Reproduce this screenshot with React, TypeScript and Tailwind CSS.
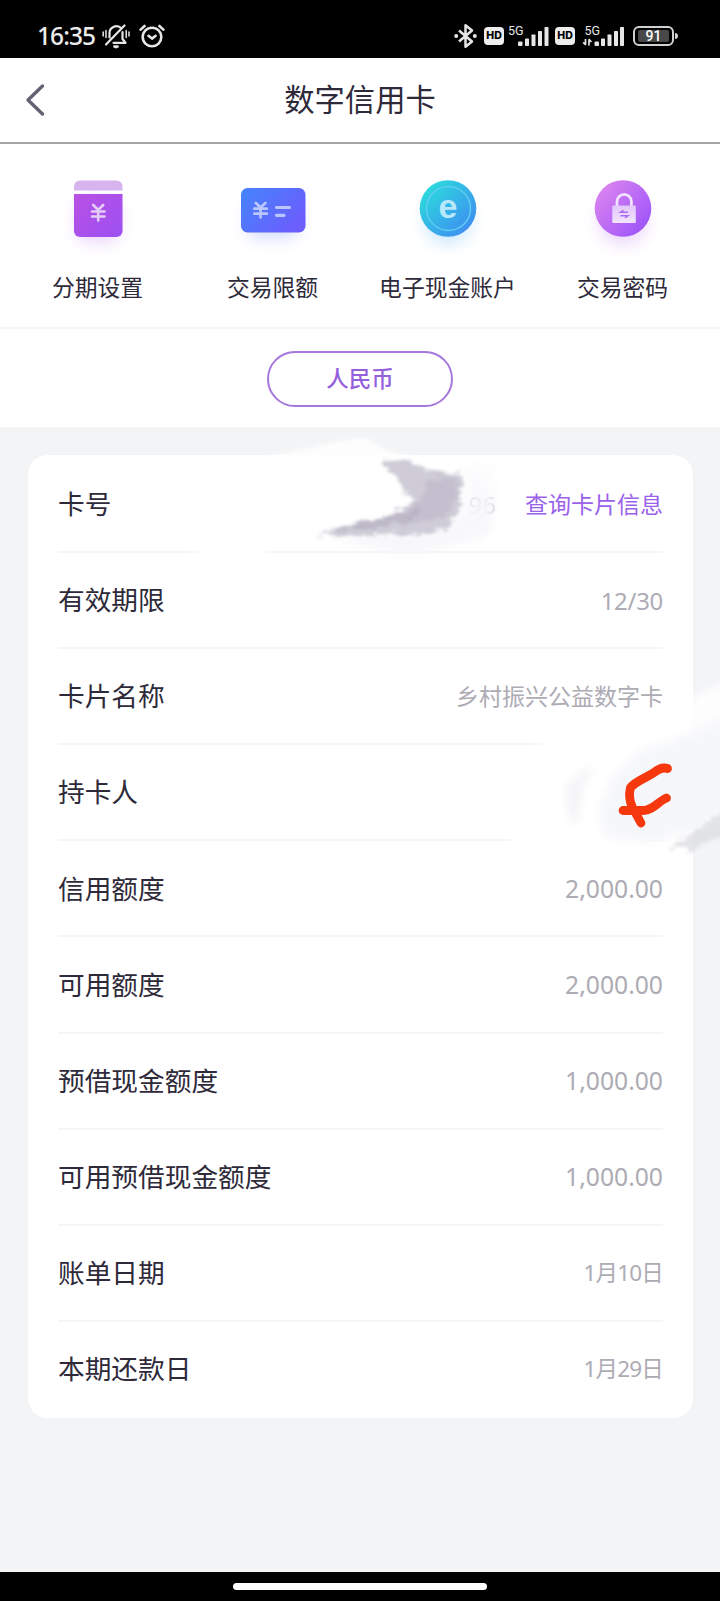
import React from 'react';

type Row = {
  label: string;
  value: string;
  valueClass: string;
};

const amount = 'text-[24.7px]';
const date = 'text-[22.5px] tracking-[-0.8px]';

const rows: Row[] = [
  { label: '有效期限', value: '12/30', valueClass: 'text-[24px] tracking-[-0.3px]' },
  { label: '卡片名称', value: '乡村振兴公益数字卡', valueClass: 'text-[23px]' },
  { label: '持卡人', value: '', valueClass: '' },
  { label: '信用额度', value: '2,000.00', valueClass: amount },
  { label: '可用额度', value: '2,000.00', valueClass: amount },
  { label: '预借现金额度', value: '1,000.00', valueClass: amount },
  { label: '可用预借现金额度', value: '1,000.00', valueClass: amount },
  { label: '账单日期', value: '1月10日', valueClass: date },
  { label: '本期还款日', value: '1月29日', valueClass: date },
];

const MuteIcon = () => (
  <svg width="28" height="26" viewBox="0 0 28 26" fill="none" stroke="#e6e6e6" strokeWidth="2.2" strokeLinecap="round">
    <path d="M7.500 14.500V10a6.800 6.800 0 0 1 11-5.300" />
    <path d="M20.500 9v7l3 3.800H11.500" strokeLinejoin="round" />
    <path d="M4 21.500 22.500 2.500" />
    <path d="M11.500 23.300h5l-2.500 1z" />
    <path d="M1.200 9v4M4 7.500v7M24.200 7.500v7M27 9v4" strokeWidth="1.5" />
  </svg>
);

const AlarmIcon = () => (
  <svg width="26" height="24" viewBox="0 0 26 24" fill="none" stroke="#e6e6e6" strokeWidth="2.6" strokeLinecap="round" strokeLinejoin="round">
    <circle cx="13" cy="13" r="9.300" />
    <path d="M9.500 11.800 13 14.600l3.600-2.800" />
    <path d="M1.600 5.600 5.600 2M24.400 5.600 20.400 2" />
  </svg>
);

const BluetoothIcon = () => (
  <svg width="24" height="26" viewBox="0 0 24 26" fill="none" stroke="#e6e6e6" strokeWidth="2.5" strokeLinejoin="round">
    <path d="M5 7.500 18 18.500l-6.500 5.300V2.200L18 7.500 5 18.500" />
    <circle cx="2.200" cy="13" r="2" fill="#e6e6e6" stroke="none" />
    <circle cx="20.800" cy="13" r="2" fill="#e6e6e6" stroke="none" />
  </svg>
);

const HdBadge = () => (
  <div className="flex h-[18px] w-[20px] items-center justify-center rounded-[4px] bg-[#ededed] font-[Inter] text-[10.5px] font-extrabold leading-none text-black">
    HD
  </div>
);

const Signal = ({ data = false }: { data?: boolean }) => (
  <svg width="42" height="24" viewBox="0 0 42 24" fill="#e6e6e6">
    <text x={data ? 2.5 : 0} y="10.500" fontSize="12.500" fontFamily="Roboto, sans-serif">5G</text>
    {data && <path d="M3.500 15v6M3.800 21 1.200 18.300M7 21.500v-6M6.800 15.200l2.600 2.800" stroke="#e6e6e6" strokeWidth="1.700" fill="none" />}
    <rect x={data ? 12.5 : 10} y="17.500" width="4.500" height="4.500" rx="1" />
    <rect x={data ? 19 : 17} y="14.500" width="4" height="7.500" rx=".7" />
    <rect x={data ? 25.5 : 23.5} y="10.500" width="4" height="11.500" rx=".7" />
    <rect x={data ? 32 : 30} y="7" width="4" height="15" rx=".7" />
    <rect x={data ? 38 : 36.5} y="3" width="4" height="19" rx=".7" />
  </svg>
);

const Battery = () => (
  <div className="flex items-center gap-[1px]">
    <div className="flex h-[20px] w-[41px] items-center justify-center rounded-[6px] border-2 border-[#d0d0d0] p-[2px]">
      <div className="flex h-full w-[31px] items-center justify-center rounded-[2px] bg-[#484848] font-[Roboto] text-[14px] font-medium leading-none text-white">
        91
      </div>
    </div>
    <div className="h-[6px] w-[3px] rounded-r bg-[#d0d0d0]" />
  </div>
);

const StatusBar = () => (
  <div className="flex h-[58px] shrink-0 items-start justify-between bg-black pl-[37px] pr-[42px] text-[#ececec]">
    <div className="flex items-center pt-[23px]">
      <span className="w-[65px] text-[24.5px] font-medium leading-[26px] tracking-[-0.9px]">16:35</span>
      <MuteIcon />
      <span className="ml-[9px] flex">
        <AlarmIcon />
      </span>
    </div>
    <div className="flex items-center pt-[23px]">
      <BluetoothIcon />
      <span className="ml-[6px]"><HdBadge /></span>
      <span className="ml-[4px]"><Signal /></span>
      <span className="ml-[5px]"><HdBadge /></span>
      <span className="ml-[7px]"><Signal data /></span>
      <span className="ml-[9px]"><Battery /></span>
    </div>
  </div>
);

const InstallmentIcon = () => (
  <svg width="90" height="90" viewBox="0 0 90 90">
    <defs>
      <linearGradient id="inst" x1="0" y1="0" x2="1" y2="1">
        <stop offset="0" stopColor="#b950e4" />
        <stop offset="1" stopColor="#9c50f2" />
      </linearGradient>
      <filter id="soft" x="-50%" y="-50%" width="200%" height="200%">
        <feGaussianBlur stdDeviation="8" />
      </filter>
    </defs>
    <rect x="24" y="30" width="42" height="42" rx="10" fill="#b45cf0" opacity=".26" filter="url(#soft)" />
    <path d="M21 20.500v-4a6 6 0 0 1 6-6h36.500a6 6 0 0 1 6 6v4z" fill="#d7b4ee" />
    <path d="M21 24h48.500v37a6 6 0 0 1-6 6H27a6 6 0 0 1-6-6z" fill="url(#inst)" />
    <path d="m40.200 35 5 5 5-5M39 41.500h12.500M39 46.500h12.500M45.200 41v9.500" fill="none" stroke="#e5cdf9" strokeWidth="2.600" strokeLinecap="round" />
  </svg>
);

const LimitIcon = () => (
  <svg width="90" height="90" viewBox="0 0 90 90">
    <defs>
      <linearGradient id="limit" x1="0" y1="0" x2="1" y2=".6">
        <stop offset="0" stopColor="#4485fb" />
        <stop offset="1" stopColor="#6b5efd" />
      </linearGradient>
    </defs>
    <rect x="19" y="34" width="52" height="34" rx="10" fill="#5b78ff" opacity=".25" filter="url(#soft)" />
    <rect x="13" y="18" width="64.500" height="44.500" rx="6.500" fill="url(#limit)" />
    <path d="m27.800 33 4.800 4.500 4.800-4.500M26.300 38.700h12.500M26.300 43.700h12.500M32.600 38v9.500" fill="none" stroke="#b9c6ff" strokeWidth="2.700" strokeLinecap="round" />
    <path d="M48.500 37.500h13M48.500 45.300h7.500" stroke="#b9c6ff" strokeWidth="3.200" strokeLinecap="round" />
  </svg>
);

const CashIcon = () => (
  <svg width="90" height="90" viewBox="0 0 90 90">
    <defs>
      <linearGradient id="cash" x1=".1" y1=".1" x2=".9" y2=".9">
        <stop offset="0" stopColor="#2bdcdc" />
        <stop offset="1" stopColor="#3f8cf2" />
      </linearGradient>
    </defs>
    <circle cx="45" cy="51" r="24" fill="#3fa8f2" opacity=".24" filter="url(#soft)" />
    <circle cx="45" cy="38.500" r="28.300" fill="url(#cash)" />
    <circle cx="45.500" cy="38.500" r="22" fill="none" stroke="#5dcdf2" strokeWidth="1.500" />
    <text x="45" y="48" textAnchor="middle" fontSize="34" fontWeight="700" fontFamily="Liberation Sans, sans-serif" fill="#b8e9fa">e</text>
  </svg>
);

const PasswordIcon = () => (
  <svg width="90" height="90" viewBox="0 0 90 90">
    <defs>
      <linearGradient id="pwd" x1=".1" y1=".1" x2=".9" y2=".8">
        <stop offset="0" stopColor="#db84f0" />
        <stop offset="1" stopColor="#a057f8" />
      </linearGradient>
      <linearGradient id="lock" x1="0" y1="0" x2="0" y2="1">
        <stop offset="0" stopColor="#e2c6fb" />
        <stop offset="1" stopColor="#f1e5fe" />
      </linearGradient>
    </defs>
    <circle cx="45" cy="51" r="24" fill="#b45cf0" opacity=".24" filter="url(#soft)" />
    <circle cx="45" cy="38.500" r="28.300" fill="url(#pwd)" />
    <path d="M39 36v-4.500a7.200 7.200 0 0 1 14.400 0V36" fill="none" stroke="#f3e2fd" strokeWidth="2.800" />
    <rect x="34.300" y="35.500" width="23.500" height="17.500" rx="1" fill="url(#lock)" />
    <path d="M50 42.300h-7.500l3-2M42.500 45.800H50l-3 2.200" fill="none" stroke="#ad6cf2" strokeWidth="1.500" />
  </svg>
);

const actions = [
  { label: '分期设置', icon: <InstallmentIcon /> },
  { label: '交易限额', icon: <LimitIcon /> },
  { label: '电子现金账户', icon: <CashIcon /> },
  { label: '交易密码', icon: <PasswordIcon /> },
];

// Scribbles laid over the card number and the holder's name
const Scribbles = () => (
  <svg className="pointer-events-none absolute left-0 top-0" width="720" height="480" viewBox="0 427 720 480">
    <defs>
      <filter id="b2" x="-20%" y="-20%" width="140%" height="140%">
        <feGaussianBlur stdDeviation="2" />
      </filter>
      <filter id="b5" x="-30%" y="-30%" width="160%" height="160%">
        <feGaussianBlur stdDeviation="5" />
      </filter>
      <filter id="rough" x="-20%" y="-20%" width="140%" height="140%">
        <feTurbulence type="fractalNoise" baseFrequency="0.09 0.3" numOctaves="3" result="n" />
        <feDisplacementMap in="SourceGraphic" in2="n" scale="14" xChannelSelector="R" yChannelSelector="G" />
        <feGaussianBlur stdDeviation="1.7" />
      </filter>
    </defs>

    <path d="M196 541h70v20h-70z" fill="#fff" filter="url(#b5)" />
    <path d="M270 457l50-12 38-7 10 1 16 10 30 10-20 16-120 4z" fill="#fff" opacity=".85" filter="url(#b2)" />
    <path d="M330 536c40-4 90-6 120-10l44-36-4 44-50 14-30 8-40-8z" fill="#f5f4f8" opacity=".75" filter="url(#b5)" />
    <path d="M462 466h32v30l-8 40-30 6z" fill="#f9f8fb" opacity=".6" filter="url(#b5)" />
    <g filter="url(#rough)">
      <path d="M384 461l26-1 17 10 32 4 3 10-1 18-5 15-8 11-20 6-34 1-24-1-24 2-28-1 22-8 28-7 28-8 12-6 6-9-14-3 4-6-6-8-8-8z" fill="#cac7d3" opacity=".9" />
      <path d="M424 480l31-3 3 20-12 20-30 6-12-6 14-12 6-12z" fill="#b9b4c6" opacity=".5" />
      <path d="M322 533l34-10 40-9 26-7-8 14-44 8z" fill="#aeaabc" opacity=".55" />
    </g>

    <path d="M540 736h155v14H540zM512 832h130v16H512z" fill="#fff" filter="url(#b5)" />
    <path d="M690 698l40-18v52l-40 18z" fill="#fff" opacity=".9" filter="url(#b5)" />
    <path d="M606 838l-8-26 14-34 26-26 54-20 38-14v102l-40 12-38 10z" fill="#f6f7fa" filter="url(#b5)" />
    <path d="M566 786l18-16 10-4-12 24-4 34-10-6z" fill="#f4f4f7" filter="url(#b5)" />
    <path d="M666 849l32-20 26-18v26l-16 4-18 12-6-6z" fill="#dcdde1" opacity=".75" filter="url(#rough)" />
    <path d="M667.500 768.500c-6-2-11 2-15 5-8 5-17 8-22 14-2 8-1 14 2 20l8.500 15.500" fill="none" stroke="#f6380f" strokeWidth="8.800" strokeLinecap="round" strokeLinejoin="round" />
    <path d="M623 810.500h20c10 0 15-9 23.500-12.500" fill="none" stroke="#f6380f" strokeWidth="8.800" strokeLinecap="round" strokeLinejoin="round" />
  </svg>
);

const App: React.FC = () => {
  return (
    <div className="flex h-[1601px] w-[720px] flex-col overflow-hidden bg-[#f3f4f6] font-['Noto_Sans','Noto_Sans_CJK_SC',sans-serif] text-[#2e2a3a]">
      <StatusBar />

      {/* Header */}
      <header className="grid h-[86px] shrink-0 grid-cols-[80px_1fr_80px] items-center border-b-2 border-[#a3a3a5] bg-white">
        <svg className="ml-[25px]" width="22" height="34" viewBox="0 0 22 34" fill="none" stroke="#666172" strokeWidth="3.400" strokeLinecap="round" strokeLinejoin="round">
          <path d="M17.500 3 3 17l14.500 14" />
        </svg>
        <h1 className="text-center text-[30.3px] leading-none">数字信用卡</h1>
      </header>

      {/* Quick actions */}
      <div className="flex h-[185px] shrink-0 justify-center border-b-2 border-[#f6f6f8] bg-white pt-[26px]">
        {actions.map(action => (
          <div key={action.label} className="flex w-[175px] flex-col items-center">
            {action.icon}
            <span className="mt-[11px] text-[22.8px] leading-[34px]">{action.label}</span>
          </div>
        ))}
      </div>

      {/* Currency */}
      <div className="flex h-[98px] shrink-0 justify-center bg-white pt-[22px]">
        <button className="h-[56px] w-[186px] rounded-full border-2 border-[#a678de] text-[22.5px] font-medium leading-none text-[#9460dc]">
          人民币
        </button>
      </div>

      {/* Card details */}
      <main className="relative flex-1 px-[28px] pt-[28px]">
        <div className="flex h-[963px] w-[665px] flex-col rounded-[20px] bg-white pl-[30px] pr-[30px] pt-[2px]">
          <div className="flex flex-1 items-center border-b-2 border-[#f6f6f8] pt-px">
            <span className="text-[26.7px] leading-none">卡号</span>
            <span className="ml-auto text-[24px] leading-none text-[#d4d3d9]">96</span>
            <a className="ml-[29px] text-[23px] leading-none text-[#9a62ea]">查询卡片信息</a>
          </div>
          {rows.map(row => (
            <div key={row.label} className="flex flex-1 items-center justify-between border-b-2 border-[#f6f6f8] pt-px last:border-transparent">
              <span className="text-[26.7px] leading-none">{row.label}</span>
              <span className={`leading-none text-[#adabb4] ${row.valueClass}`}>{row.value}</span>
            </div>
          ))}
        </div>
        <Scribbles />
      </main>

      <footer className="flex h-[29px] shrink-0 justify-center bg-black pt-[11px]">
        <div className="h-[7px] w-[254px] rounded-full bg-white" />
      </footer>
    </div>
  );
};

export default App;
